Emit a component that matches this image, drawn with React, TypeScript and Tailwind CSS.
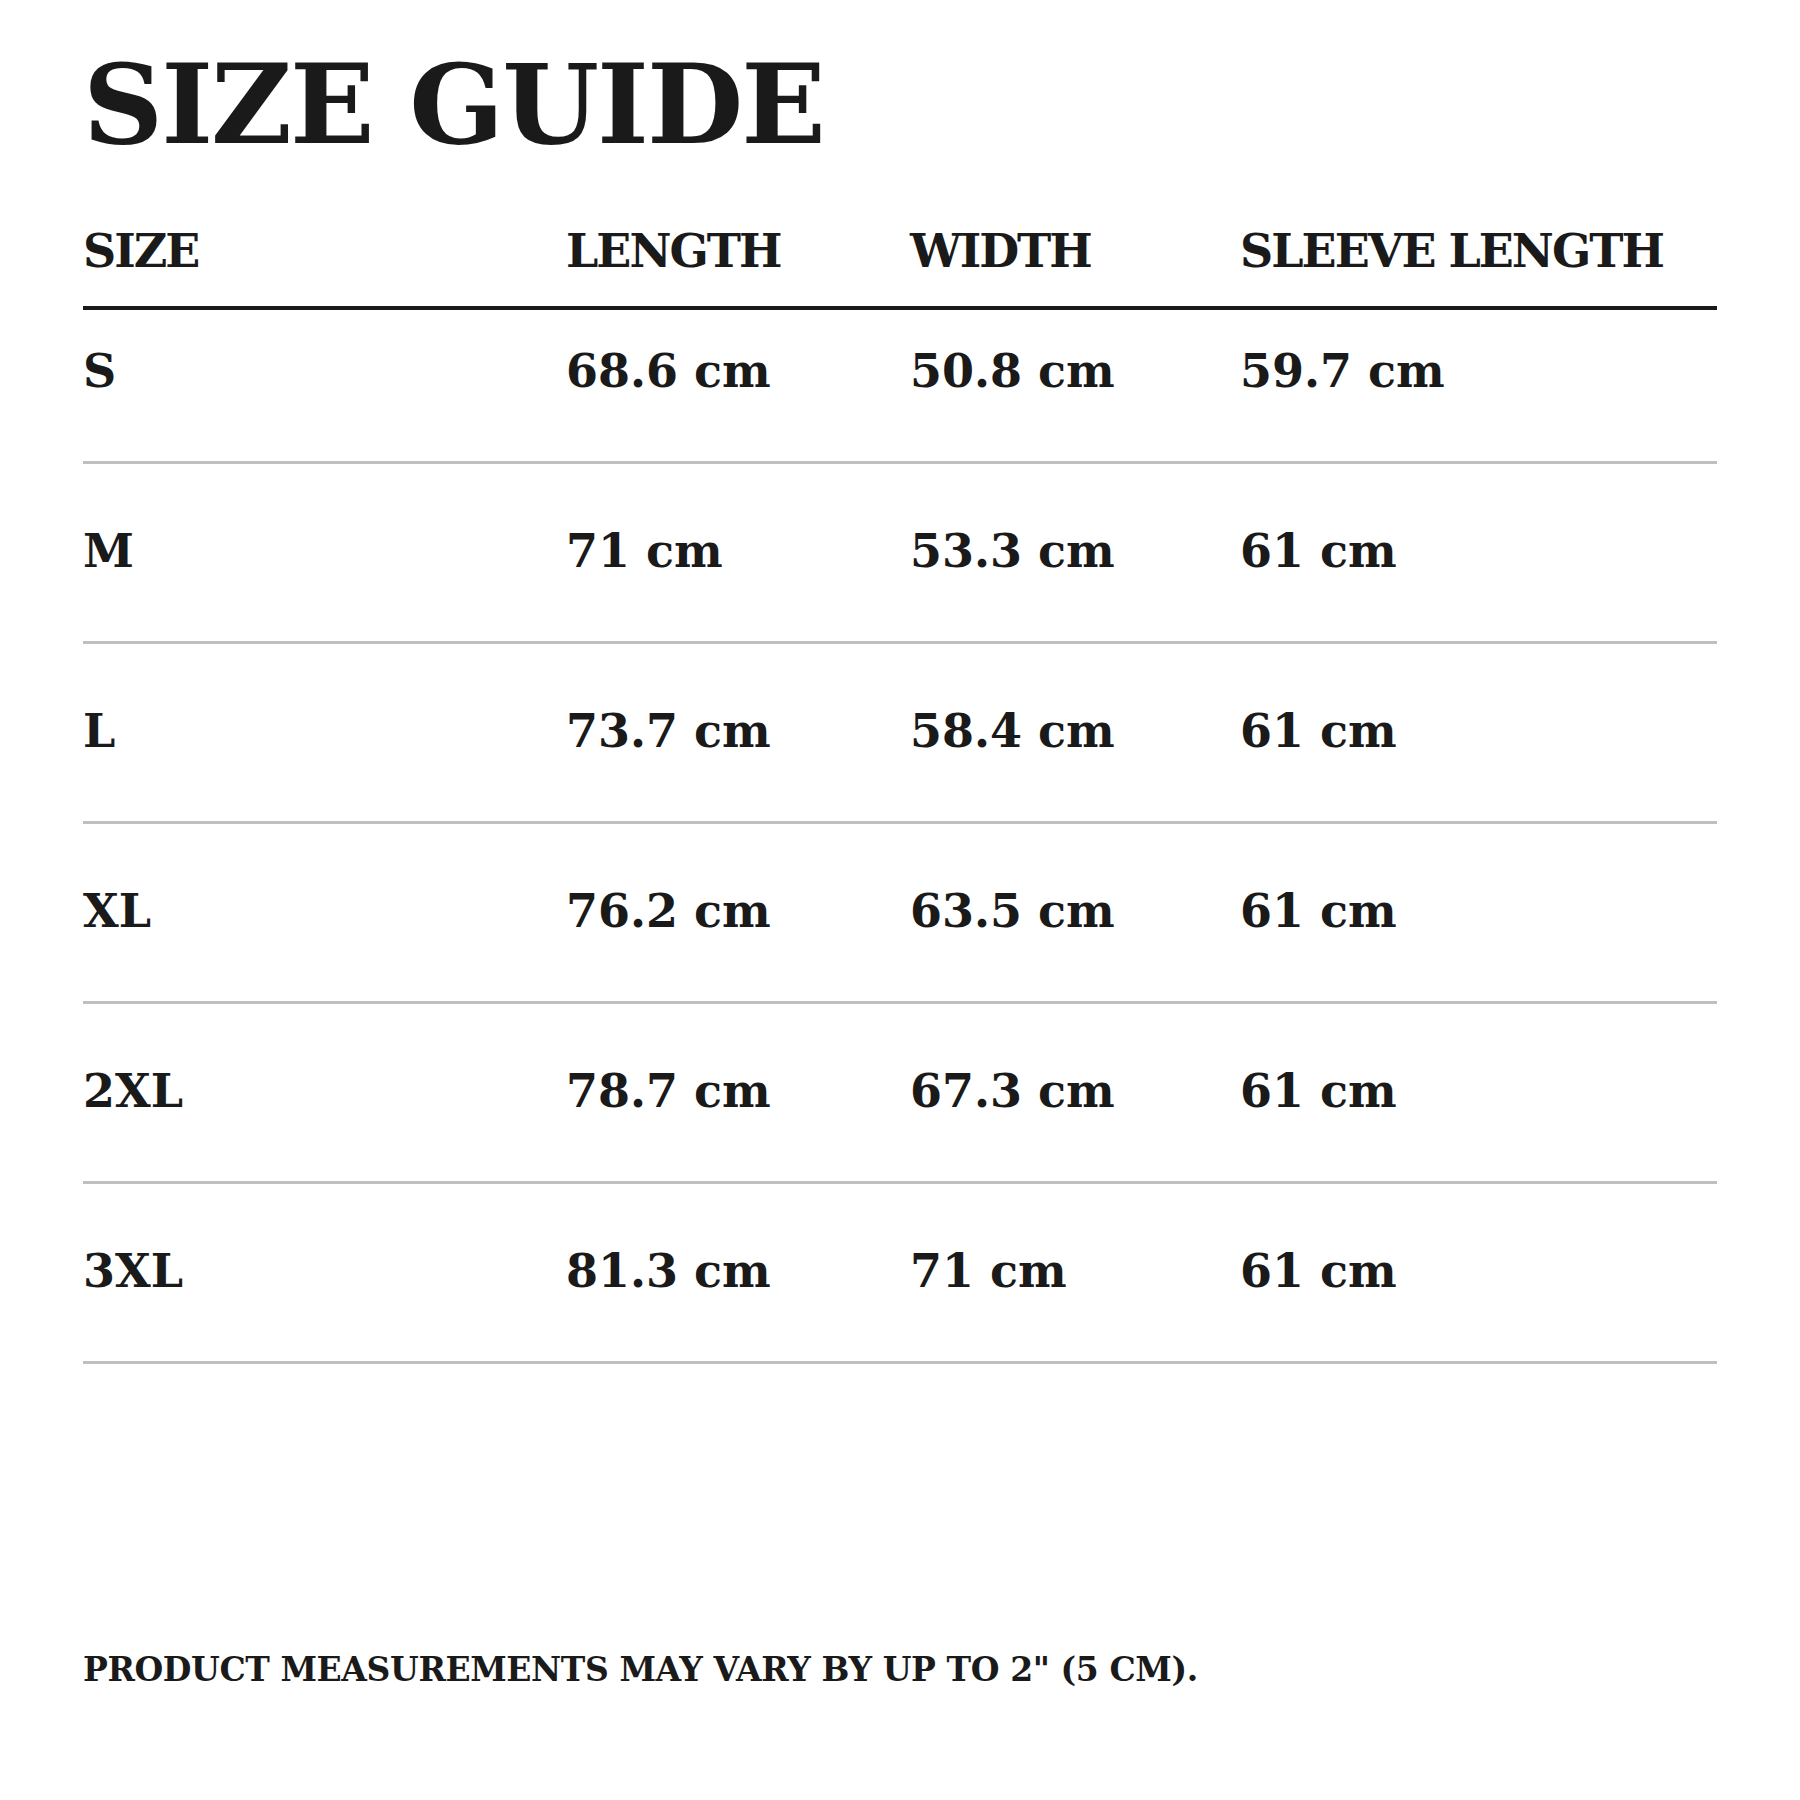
import React from "react";

const rows = [
  { size: "S", length: "68.6 cm", width: "50.8 cm", sleeve: "59.7 cm" },
  { size: "M", length: "71 cm", width: "53.3 cm", sleeve: "61 cm" },
  { size: "L", length: "73.7 cm", width: "58.4 cm", sleeve: "61 cm" },
  { size: "XL", length: "76.2 cm", width: "63.5 cm", sleeve: "61 cm" },
  { size: "2XL", length: "78.7 cm", width: "67.3 cm", sleeve: "61 cm" },
  { size: "3XL", length: "81.3 cm", width: "71 cm", sleeve: "61 cm" },
];

const cols = "grid grid-cols-[483px_344px_330px_1fr]";

export default function App() {
  return (
    <div className="w-[1800px] h-[1800px] bg-white text-[#1a1a1a] font-['DejaVu_Serif',serif] font-bold">
      <div className="ml-[83px] pt-[49px] w-[1634px]">
        <h1 className="text-[111px] leading-none uppercase tracking-[-2px]">Size Guide</h1>

        <div className={`${cols} mt-[68px] pb-[32px] border-b-4 border-[#1a1a1a] text-[46px] leading-none uppercase tracking-[-2px]`}>
          <div>Size</div>
          <div>Length</div>
          <div>Width</div>
          <div>Sleeve Length</div>
        </div>

        {rows.map((r, i) => (
          <div
            key={r.size}
            className={`${cols} ${i === 0 ? "pt-[38px]" : "pt-[64px]"} pb-[67px] border-b-[3px] border-[#c0c0c0] text-[46px] leading-none`}
          >
            <div>{r.size}</div>
            <div>{r.length}</div>
            <div>{r.width}</div>
            <div>{r.sleeve}</div>
          </div>
        ))}

        <p className="mt-[289px] text-[33px] leading-none uppercase tracking-[-0.4px]">
          Product measurements may vary by up to 2" (5 cm).
        </p>
      </div>
    </div>
  );
}
